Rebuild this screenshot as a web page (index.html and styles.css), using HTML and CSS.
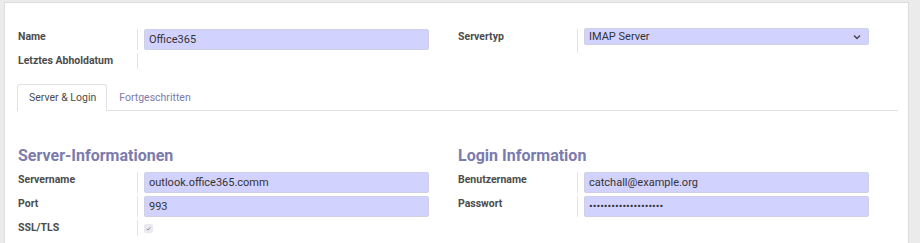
FILE: index.html
```html
<!DOCTYPE html>
<html lang="de">
<head>
    <meta charset="UTF-8">
    <title>Eingehender Mailserver</title>
    <link rel="stylesheet" href="styles.css">
</head>
<body>
    <div class="sheet">
        <div class="group-row top">
            <div class="group">
                <div class="field">
                    <div class="label">Name</div>
                    <div class="value"><input class="input" type="text" value="Office365"></div>
                </div>
                <div class="field short">
                    <div class="label">Letztes Abholdatum</div>
                    <div class="value"></div>
                </div>
            </div>
            <div class="group">
                <div class="field select-field">
                    <div class="label">Servertyp</div>
                    <div class="value">
                        <div class="select-wrap">
                            <select class="select">
                                <option>IMAP Server</option>
                            </select>
                            <svg class="chevron" width="8" height="6" viewBox="0 0 8 6">
                                <path d="M1 1.5 L4 4.5 L7 1.5" fill="none" stroke="#444" stroke-width="1.4"/>
                            </svg>
                        </div>
                    </div>
                </div>
            </div>
        </div>

        <div class="tabs">
            <div class="tab active">Server &amp; Login</div>
            <div class="tab">Fortgeschritten</div>
        </div>

        <div class="group-row">
            <div class="group">
                <h2>Server-Informationen</h2>
                <div class="field">
                    <div class="label">Servername</div>
                    <div class="value"><input class="input" type="text" value="outlook.office365.comm"></div>
                </div>
                <div class="field">
                    <div class="label">Port</div>
                    <div class="value"><input class="input" type="text" value="993"></div>
                </div>
                <div class="field">
                    <div class="label">SSL/TLS</div>
                    <div class="value">
                        <span class="check">
                            <svg width="9" height="9" viewBox="0 0 9 9">
                                <path d="M2.8 4.9 L4 6 L6.4 3.4" fill="none" stroke="#8d8cb8" stroke-width="1"/>
                            </svg>
                        </span>
                    </div>
                </div>
            </div>
            <div class="group">
                <h2>Login Information</h2>
                <div class="field">
                    <div class="label">Benutzername</div>
                    <div class="value"><input class="input" type="text" value="catchall@example.org"></div>
                </div>
                <div class="field">
                    <div class="label">Passwort</div>
                    <div class="value"><input class="input" type="password" value="xxxxxxxxxxxxxxxxxxxx"></div>
                </div>
            </div>
        </div>
    </div>
</body>
</html>
```

FILE: styles.css
```css
body {
    margin: 0;
    background-color: #ebebeb;
    font-family: Roboto, "Liberation Sans", sans-serif;
    font-size: 10.5px;
    color: #4c4c4c;
    overflow: hidden;
}
.sheet {
    margin: 2px 11px 0 4px;
    height: 241px;
    overflow: hidden;
    background-color: white;
    border: 1px solid #dcdcdc;
    border-bottom: none;
    padding: 26px 10px 0 13px;
    box-sizing: border-box;
}
.group-row {
    display: flex;
}
.group {
    width: 50%;
    padding-right: 29px;
    box-sizing: border-box;
}
.field {
    display: flex;
    margin-bottom: 3px;
}
.field.short {
    height: 16px;
}
.label {
    width: 119px;
    flex-shrink: 0;
    border-right: 1px solid #e2e2e2;
    font-weight: bold;
    line-height: 15px;
    color: #4c4c4c;
}
.value {
    flex: 1;
    padding-left: 6px;
}
.input {
    display: block;
    width: 100%;
    height: 21px;
    box-sizing: border-box;
    margin: 0;
    padding: 0 4px;
    border: 1px solid #cfcfe6;
    border-radius: 2px;
    background-color: #d2d2ff;
    font-family: inherit;
    font-size: 11px;
    color: #333;
    outline: none;
}
.select-field .label {
    height: 24px;
}
.select-wrap {
    position: relative;
    margin-top: -1px;
}
.select {
    display: block;
    width: 100%;
    height: 17px;
    margin: 0;
    padding: 0 4px;
    border: 1px solid #cfcfe6;
    border-radius: 2px;
    background-color: #d2d2ff;
    font-family: inherit;
    font-size: 11px;
    color: #333;
    appearance: none;
    outline: none;
}
.chevron {
    position: absolute;
    right: 8px;
    top: 6px;
}
.tabs {
    display: flex;
    margin-top: 12px;
    margin-left: -1px;
    border-bottom: 1px solid #dee2e6;
}
.tab {
    padding: 0 10px 0 11px;
    height: 25px;
    line-height: 25px;
    color: #7c7bad;
    border: 1px solid transparent;
    border-bottom: none;
}
.tab.active {
    color: #4c4c4c;
    border-color: #dee2e6;
    border-radius: 3px 3px 0 0;
    margin-bottom: -1px;
    height: 26px;
    background-color: white;
}
h2 {
    margin: 35px 0 6px;
    font-size: 16px;
    line-height: 20px;
    color: #7c7bad;
    font-weight: bold;
}
.check {
    display: inline-block;
    width: 9px;
    height: 9px;
    margin-top: 4px;
    border-radius: 2px;
    background-color: #e9e9ee;
}
.check svg {
    display: block;
}
```
